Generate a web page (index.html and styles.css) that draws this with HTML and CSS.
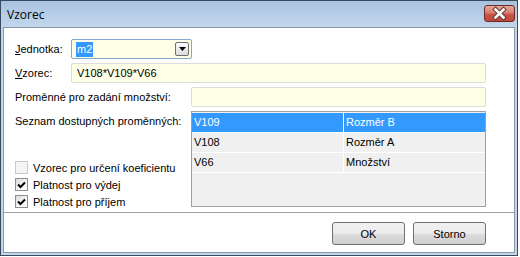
FILE: index.html
```html
<!DOCTYPE html>
<html lang="cs">
<head>
<meta charset="utf-8">
<title>Vzorec</title>
<link rel="stylesheet" href="styles.css">
</head>
<body>
<div class="window">
  <div class="titlebar">
    <span class="title">Vzorec</span>
    <span class="close">
      <svg width="31" height="17" viewBox="0 0 31 17">
        <path d="M11.5 4.5 L19.5 12.5 M19.5 4.5 L11.5 12.5" stroke="#6a3a36" stroke-width="4.6" stroke-linecap="square" fill="none"/>
        <path d="M11.5 4.5 L19.5 12.5 M19.5 4.5 L11.5 12.5" stroke="#ffffff" stroke-width="2.6" stroke-linecap="square" fill="none"/>
      </svg>
    </span>
  </div>
  <div class="client">
    <div class="form">
      <div class="row">
        <span class="lbl lbl-short"><u>J</u>ednotka:</span>
        <div class="combo">
          <span class="combo-text"><span class="hl">m2</span></span>
          <span class="drop">
            <svg width="7" height="4" viewBox="0 0 7 4"><path d="M0 0 H7 L3.5 4 Z" fill="#000"/></svg>
          </span>
        </div>
      </div>
      <div class="row">
        <span class="lbl lbl-short"><u>V</u>zorec:</span>
        <div class="field">V108*V109*V66</div>
      </div>
      <div class="row">
        <span class="lbl lbl-long">Proměnné pro zadání množství:</span>
        <div class="field"></div>
      </div>
      <div class="row row-list">
        <div class="left">
          <span class="lbl lbl-list">Seznam dostupných proměnných:</span>
          <div class="checks">
            <div class="check disabled"><span class="box"></span>Vzorec pro určení koeficientu</div>
            <div class="check"><span class="box checked"><svg width="9" height="8" viewBox="0 0 9 8"><path d="M1 3.5 L3.5 6 L8 1.5" stroke="#000" stroke-width="2" fill="none"/></svg></span>Platnost pro výdej</div>
            <div class="check"><span class="box checked"><svg width="9" height="8" viewBox="0 0 9 8"><path d="M1 3.5 L3.5 6 L8 1.5" stroke="#000" stroke-width="2" fill="none"/></svg></span>Platnost pro příjem</div>
          </div>
        </div>
        <div class="grid">
          <div class="grow selected"><span class="c1">V109</span><span class="c2">Rozměr B</span></div>
          <div class="grow"><span class="c1">V108</span><span class="c2">Rozměr A</span></div>
          <div class="grow"><span class="c1">V66</span><span class="c2">Množství</span></div>
        </div>
      </div>
    </div>
    <div class="sep"></div>
    <div class="buttons">
      <button class="btn">OK</button>
      <button class="btn">Storno</button>
    </div>
  </div>
</div>
</body>
</html>
```

FILE: styles.css
```css
* { box-sizing: border-box; }

html, body {
  margin: 0;
  padding: 0;
}

body {
  width: 520px;
  height: 257px;
  background: #ffffff;
  font-family: "Liberation Sans", Arial, sans-serif;
  font-size: 11px;
  color: #000;
  overflow: hidden;
}

.window {
  width: 518px;
  height: 256px;
  border: 1px solid #3a4a5e;
  background: #c2d6ec;
  display: flex;
  flex-direction: column;
}

.titlebar {
  height: 26px;
  flex: none;
  display: flex;
  align-items: flex-start;
  justify-content: space-between;
  background: linear-gradient(to bottom, #a9c2de 0%, #b8cfe8 60%, #c2d6ec 100%);
}

.title {
  font-family: "Open Sans", "Noto Sans", sans-serif;
  font-size: 12px;
  line-height: 16px;
  padding: 6px 0 0 6px;
  color: #000;
}

.close {
  width: 31px;
  height: 17px;
  margin: 4px 2px 0 0;
  border: 1px solid #6e2b25;
  border-radius: 3px;
  background: linear-gradient(to bottom, #e8a797 0%, #d88070 45%, #c95544 55%, #c2473a 100%);
  display: flex;
  align-items: center;
  justify-content: center;
  overflow: hidden;
}

.close svg { display: block; margin: -1px; }

.client {
  flex: 1;
  margin: 0 2px 2px;
  border: 1px solid #8a97a8;
  background: #ffffff;
  display: flex;
  flex-direction: column;
}

.form {
  padding: 11px 28px 0 11px;
  display: flex;
  flex-direction: column;
  gap: 4px;
}

.row {
  display: flex;
  align-items: center;
  height: 20px;
}

.lbl {
  flex: none;
  line-height: 20px;
  white-space: nowrap;
}

.lbl u { text-decoration: underline; }

.lbl-short { width: 56px; }
.lbl-long { width: 176px; }

.combo {
  width: 121px;
  height: 20px;
  border: 1px solid #86a6d2;
  border-radius: 2px;
  background: #fffee6;
  display: flex;
  align-items: center;
  justify-content: space-between;
  padding: 0 2px 0 4px;
}

.hl {
  background: #3399ff;
  color: #fff;
  padding: 1px 1px 2px 1px;
}

.drop {
  width: 14px;
  height: 14px;
  border: 1px solid #6f6f6f;
  border-radius: 2px;
  background: linear-gradient(to bottom, #fafafa, #dcdcdc);
  display: flex;
  align-items: center;
  justify-content: center;
}

.drop svg { display: block; }

.field {
  flex: 1;
  height: 20px;
  border: 1px solid #dcdcdc;
  border-radius: 2px;
  background: #fffee6;
  padding: 0 5px;
  line-height: 18px;
}

.row-list {
  height: 96px;
  align-items: stretch;
}

.left {
  width: 180px;
  flex: none;
  margin-left: 0;
  display: flex;
  flex-direction: column;
  width: 176px;
}

.lbl-list { line-height: 20px; }

.checks {
  margin-top: 28px;
  display: flex;
  flex-direction: column;
}

.check {
  height: 17px;
  display: flex;
  align-items: center;
  gap: 5px;
  white-space: nowrap;
}

.box {
  width: 13px;
  height: 13px;
  border: 1px solid #8e8f8f;
  background: linear-gradient(135deg, #dcdcdc 0%, #f6f6f6 60%, #ffffff 100%);
  display: flex;
  align-items: center;
  justify-content: center;
  flex: none;
}

.check.disabled .box {
  border-color: #c9c9c9;
  background: #f4f4f4;
}

.grid {
  flex: 1;
  border: 1px solid #a0a0a0;
  background: #f0f0f0;
  padding-top: 1px;
}

.grow {
  display: flex;
  height: 20px;
  border-bottom: 1px solid #ffffff;
  line-height: 19px;
}

.grow.selected {
  background: #3399ff;
  color: #fff;
}

.c1 {
  width: 152px;
  padding-left: 2px;
  border-right: 1px solid #ffffff;
}

.c2 {
  flex: 1;
  padding-left: 2px;
}

.sep {
  margin-top: 5px;
  height: 1px;
  background: #a0a0a0;
}

.buttons {
  display: flex;
  justify-content: flex-end;
  gap: 8px;
  padding: 9px 28px 0 0;
}

.btn {
  width: 73px;
  height: 23px;
  border: 1px solid #707070;
  border-radius: 3px;
  background: linear-gradient(to bottom, #f2f2f2 0%, #ebebeb 50%, #dddddd 51%, #cfcfcf 100%);
  font-family: "Liberation Sans", Arial, sans-serif;
  font-size: 11px;
  color: #000;
  padding: 0;
}
```
